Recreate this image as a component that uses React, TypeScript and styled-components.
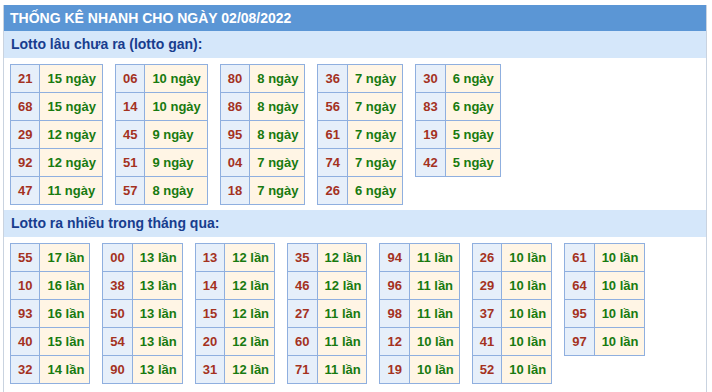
import React from "react";
import styled, { createGlobalStyle } from "styled-components";

const GlobalStyle = createGlobalStyle`
  body {
    margin: 0;
    background: #fff;
    font-family: "Liberation Sans", Arial, sans-serif;
  }
`;

const Box = styled.div`
  margin: 5px 0 0 3px;
  width: 702px;
  border-left: 1px solid #c9d3e0;
  border-right: 1px solid #c9d3e0;
  padding-bottom: 3px;
`;

const Title = styled.div`
  height: 26px;
  line-height: 26px;
  padding-left: 6px;
  background: #5b96d5;
  color: #fff;
  font-weight: bold;
  font-size: 14px;
`;

const SubTitle = styled.div`
  height: 27px;
  line-height: 27px;
  padding-left: 7px;
  background: #d5e7fa;
  color: #183d8e;
  font-weight: bold;
  font-size: 14px;
`;

const Tables = styled.div`
  display: flex;
  align-items: flex-start;
  gap: 12px;
  padding: 6px 6px 5px;
`;

const Table = styled.table`
  border-collapse: collapse;
  font-size: 13px;
  font-weight: bold;
  td {
    height: 27px;
    border: 1px solid #8fafdf;
    white-space: nowrap;
  }
`;

const Num = styled.td`
  padding: 0 7px;
  background: #e6effa;
  color: #a4321f;
  text-align: right;
`;

const Val = styled.td<{ $narrow?: boolean }>`
  padding: 0 ${(p) => (p.$narrow ? 5 : 6)}px 0 7px;
  background: #fff5e5;
  color: #187a10;
  text-align: left;
`;

type Item = [string, number];

const gan: Item[][] = [
  [["21", 15], ["68", 15], ["29", 12], ["92", 12], ["47", 11]],
  [["06", 10], ["14", 10], ["45", 9], ["51", 9], ["57", 8]],
  [["80", 8], ["86", 8], ["95", 8], ["04", 7], ["18", 7]],
  [["36", 7], ["56", 7], ["61", 7], ["74", 7], ["26", 6]],
  [["30", 6], ["83", 6], ["19", 5], ["42", 5]],
];

const nhieu: Item[][] = [
  [["55", 17], ["10", 16], ["93", 16], ["40", 15], ["32", 14]],
  [["00", 13], ["38", 13], ["50", 13], ["54", 13], ["90", 13]],
  [["13", 12], ["14", 12], ["15", 12], ["20", 12], ["31", 12]],
  [["35", 12], ["46", 12], ["27", 11], ["60", 11], ["71", 11]],
  [["94", 11], ["96", 11], ["98", 11], ["12", 10], ["19", 10]],
  [["26", 10], ["29", 10], ["37", 10], ["41", 10], ["52", 10]],
  [["61", 10], ["64", 10], ["95", 10], ["97", 10]],
];

const Group = ({
  data,
  unit,
  narrow,
}: {
  data: Item[][];
  unit: string;
  narrow?: boolean;
}) => (
  <Tables>
    {data.map((col, i) => (
      <Table key={i}>
        <tbody>
          {col.map(([n, c]) => (
            <tr key={n}>
              <Num>{n}</Num>
              <Val $narrow={narrow}>
                {c} {unit}
              </Val>
            </tr>
          ))}
        </tbody>
      </Table>
    ))}
  </Tables>
);

const App = () => (
  <>
    <GlobalStyle />
    <Box>
      <Title>THỐNG KÊ NHANH CHO NGÀY 02/08/2022</Title>
      <SubTitle>Lotto lâu chưa ra (lotto gan):</SubTitle>
      <Group data={gan} unit="ngày" />
      <SubTitle>Lotto ra nhiều trong tháng qua:</SubTitle>
      <Group data={nhieu} unit="lần" narrow />
    </Box>
  </>
);

export default App;
